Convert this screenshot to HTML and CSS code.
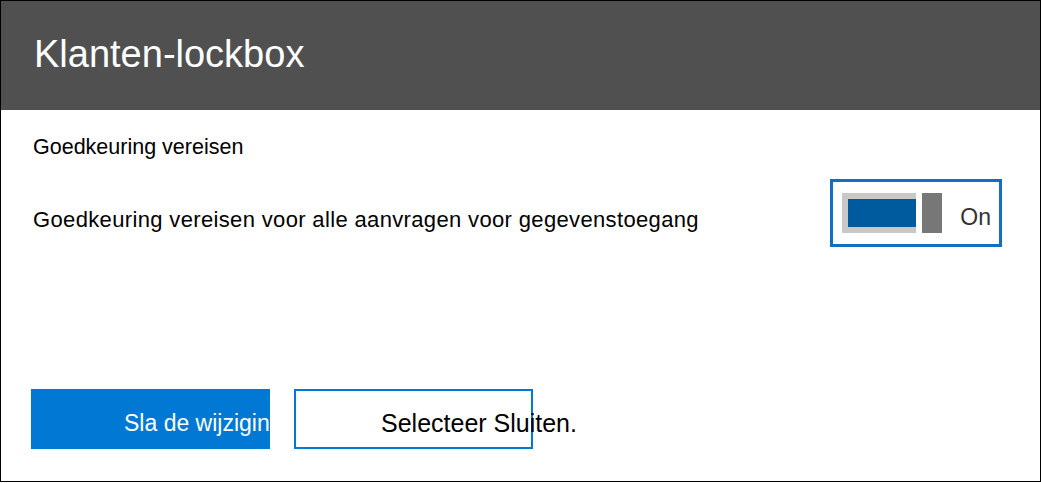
FILE: index.html
```html
<!DOCTYPE html>
<html lang="nl">
<head>
<meta charset="utf-8">
<title>Klanten-lockbox</title>
<link rel="stylesheet" href="styles.css">
</head>
<body>
<div class="frame">
  <header class="header">
    <h1 class="title">Klanten-lockbox</h1>
  </header>
  <main class="content">
    <div class="label">Goedkeuring vereisen</div>
    <div class="setting-row">
      <div class="setting-text">Goedkeuring vereisen voor alle aanvragen voor gegevenstoegang</div>
      <div class="toggle" role="switch" aria-checked="true">
        <div class="track"><div class="fill"></div></div>
        <div class="thumb"></div>
        <span class="toggle-label">On</span>
      </div>
    </div>
  </main>
  <footer class="actions">
    <button class="btn btn-primary">Sla de wijzigingen op.</button>
    <button class="btn btn-secondary">Selecteer Sluiten.</button>
  </footer>
</div>
</body>
</html>
```
FILE: styles.css
```css
html, body {
  margin: 0;
  padding: 0;
  background: #ffffff;
}

body {
  font-family: "Liberation Sans", Arial, sans-serif;
  color: #000;
}

.frame {
  box-sizing: border-box;
  width: 1041px;
  height: 482px;
  border: 1px solid #000;
  display: flex;
  flex-direction: column;
  background: #fff;
}

.header {
  height: 109px;
  background: #505050;
  padding: 31px 0 0 33px;
  box-sizing: border-box;
  flex: none;
}

.title {
  margin: 0;
  font-weight: normal;
  font-size: 38px;
  line-height: 44px;
  color: #fff;
}

.content {
  padding: 24px 38px 0 32px;
}

.label {
  font-size: 21.5px;
  line-height: 26px;
}

.setting-row {
  margin-top: 19px;
  display: flex;
  justify-content: space-between;
  align-items: flex-start;
}

.setting-text {
  margin-top: 28px;
  font-size: 22px;
  letter-spacing: 0.35px;
  line-height: 26px;
}

.toggle {
  box-sizing: border-box;
  width: 172px;
  height: 68px;
  border: 3px solid #1170c4;
  padding: 11px 8px 0 9px;
  display: flex;
  align-items: flex-start;
}

.track {
  box-sizing: border-box;
  width: 74px;
  height: 40px;
  background: #c8c8c8;
  padding: 6px 0 6px 6px;
}

.fill {
  height: 100%;
  background: #005a9e;
}

.thumb {
  width: 20px;
  height: 40px;
  margin-left: 6px;
  background: #777777;
}

.toggle-label {
  margin-left: auto;
  margin-top: 4px;
  font-size: 23px;
  line-height: 40px;
  color: #333;
}

.actions {
  margin-top: auto;
  margin-bottom: 32px;
  padding-left: 30px;
  display: flex;
  gap: 24px;
}

.btn {
  box-sizing: border-box;
  width: 239px;
  height: 60px;
  font-family: "Liberation Sans", Arial, sans-serif;
  white-space: nowrap;
  text-align: left;
  cursor: pointer;
  margin: 0;
}

.btn-primary {
  background: #0078d4;
  color: #fff;
  border: none;
  font-size: 23px;
  padding: 8px 0 0 93px;
  overflow: hidden;
}

.btn-secondary {
  background: #fff;
  color: #000;
  border: 2px solid #0078d4;
  font-size: 25px;
  padding: 8px 0 0 85px;
  overflow: visible;
}
```
